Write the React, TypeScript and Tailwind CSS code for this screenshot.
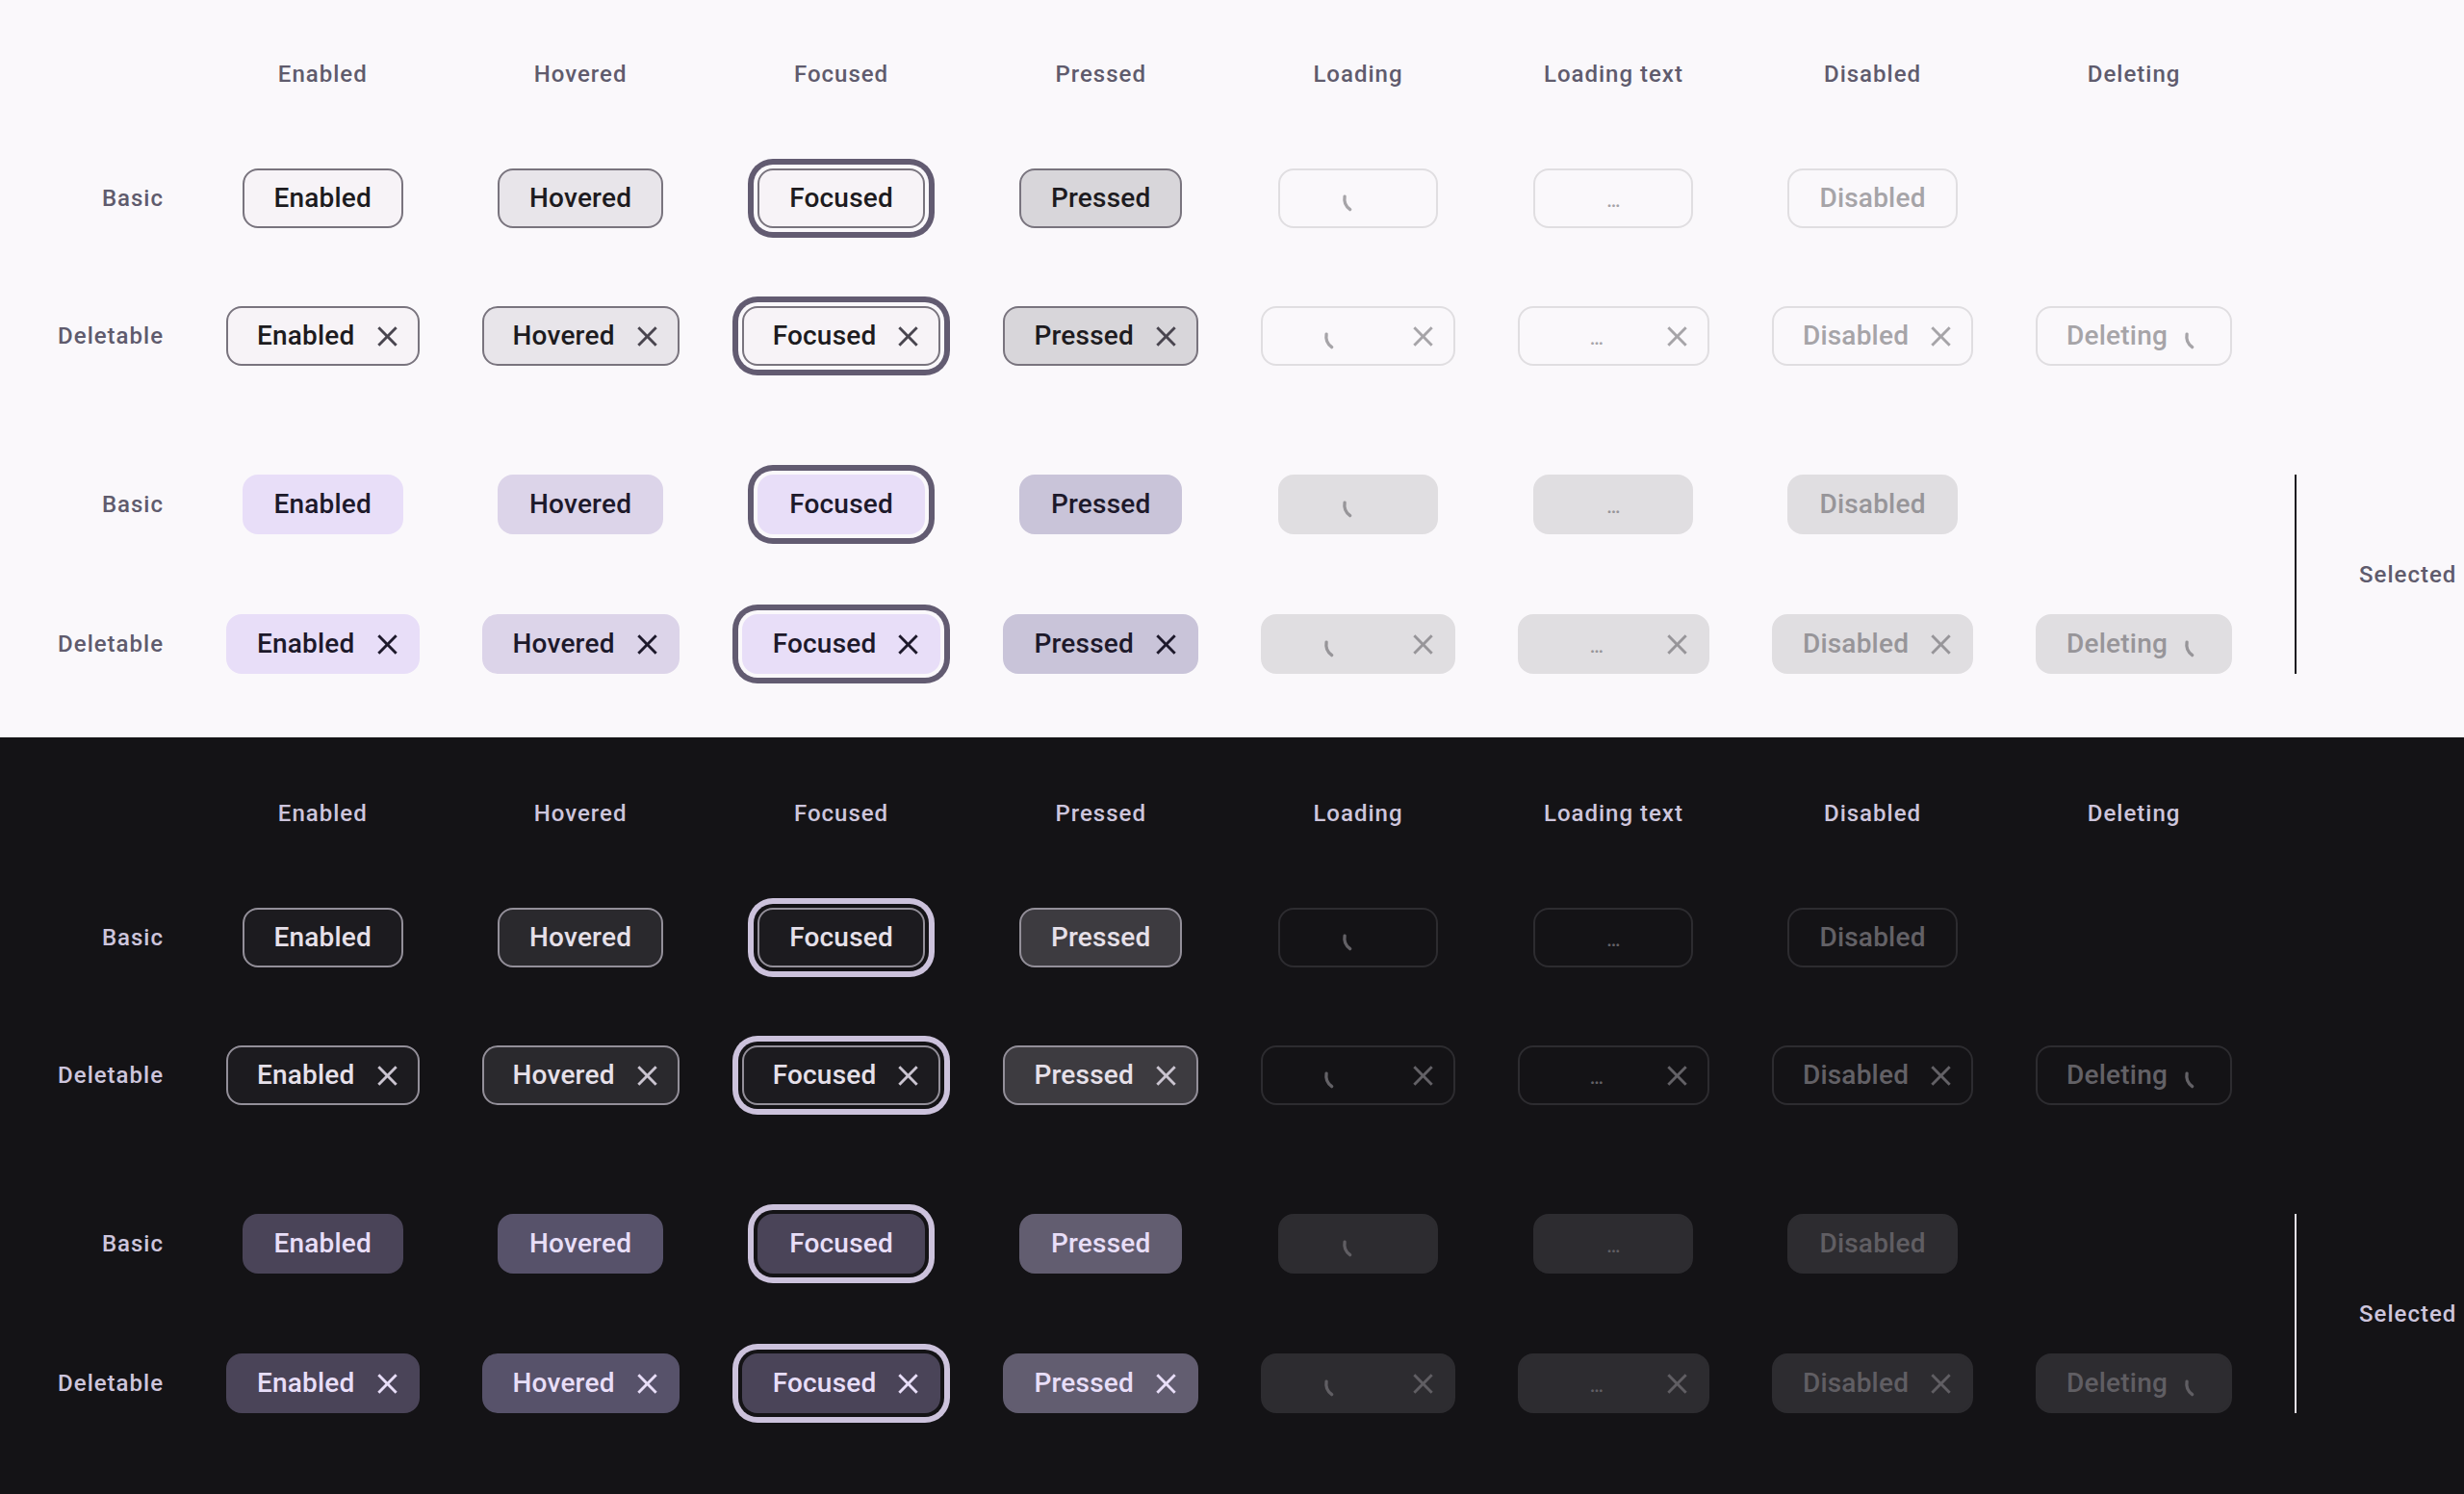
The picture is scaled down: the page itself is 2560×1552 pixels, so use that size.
import React from 'react';

type State = 'enabled' | 'hovered' | 'focused' | 'pressed' | 'loading' | 'loadingText' | 'disabled' | 'deleting';

const columns: { state: State; title: string }[] = [
    { state: 'enabled', title: 'Enabled' },
    { state: 'hovered', title: 'Hovered' },
    { state: 'focused', title: 'Focused' },
    { state: 'pressed', title: 'Pressed' },
    { state: 'loading', title: 'Loading' },
    { state: 'loadingText', title: 'Loading text' },
    { state: 'disabled', title: 'Disabled' },
    { state: 'deleting', title: 'Deleting' },
];

const colStart = ['col-start-2', 'col-start-3', 'col-start-4', 'col-start-5', 'col-start-6', 'col-start-7', 'col-start-8', 'col-start-9'];

type Look = { box: string; icon: string; spin: string };

const lightOff: Record<State, Look> = {
    enabled: { box: 'border-[#79747E] bg-[#F7F3F7] text-[#1D1B20]', icon: 'text-[#49454F]', spin: '' },
    hovered: { box: 'border-[#79747E] bg-[#E8E5EA] text-[#1D1B20]', icon: 'text-[#49454F]', spin: '' },
    focused: { box: 'border-[#79747E] bg-[#F7F3F7] text-[#1D1B20] shadow-[0_0_0_4px_#FAF8FB,0_0_0_10px_#625B71]', icon: 'text-[#49454F]', spin: '' },
    pressed: { box: 'border-[#79747E] bg-[#D8D6DA] text-[#1D1B20]', icon: 'text-[#49454F]', spin: '' },
    loading: { box: 'border-[#E0DEE1] text-[#A6A4A8]', icon: 'text-[#A6A4A8]', spin: 'text-[#A6A4A8]' },
    loadingText: { box: 'border-[#E0DEE1] text-[#A6A4A8]', icon: 'text-[#A6A4A8]', spin: 'text-[#A6A4A8]' },
    disabled: { box: 'border-[#E0DEE1] text-[#A6A4A8]', icon: 'text-[#A6A4A8]', spin: 'text-[#A6A4A8]' },
    deleting: { box: 'border-[#E0DEE1] text-[#A6A4A8]', icon: 'text-[#A6A4A8]', spin: 'text-[#A6A4A8]' },
};

const lightOn: Record<State, Look> = {
    enabled: { box: 'border-[#E8DEF8] bg-[#E8DEF8] text-[#1D192B]', icon: 'text-[#1D192B]', spin: '' },
    hovered: { box: 'border-[#DCD4E9] bg-[#DCD4E9] text-[#1D192B]', icon: 'text-[#1D192B]', spin: '' },
    focused: { box: 'border-[#E8DEF8] bg-[#E8DEF8] text-[#1D192B] shadow-[0_0_0_4px_#FAF8FB,0_0_0_10px_#625B71]', icon: 'text-[#1D192B]', spin: '' },
    pressed: { box: 'border-[#C9C4D9] bg-[#C9C4D9] text-[#1D192B]', icon: 'text-[#1D192B]', spin: '' },
    loading: { box: 'border-[#E0DEE1] bg-[#E0DEE1] text-[#979599]', icon: 'text-[#979599]', spin: 'text-[#979599]' },
    loadingText: { box: 'border-[#E0DEE1] bg-[#E0DEE1] text-[#979599]', icon: 'text-[#979599]', spin: 'text-[#979599]' },
    disabled: { box: 'border-[#E0DEE1] bg-[#E0DEE1] text-[#979599]', icon: 'text-[#979599]', spin: 'text-[#979599]' },
    deleting: { box: 'border-[#E0DEE1] bg-[#E0DEE1] text-[#979599]', icon: 'text-[#979599]', spin: 'text-[#979599]' },
};

const darkOff: Record<State, Look> = {
    enabled: { box: 'border-[#938F99] bg-[#1C1B1F] text-[#E6E0E9]', icon: 'text-[#CAC4D0]', spin: '' },
    hovered: { box: 'border-[#938F99] bg-[#2A292D] text-[#E6E0E9]', icon: 'text-[#CAC4D0]', spin: '' },
    focused: { box: 'border-[#938F99] bg-[#1C1B1F] text-[#E6E0E9] shadow-[0_0_0_4px_#141316,0_0_0_10px_#CCC2DC]', icon: 'text-[#CAC4D0]', spin: '' },
    pressed: { box: 'border-[#938F99] bg-[#3D3B40] text-[#E6E0E9]', icon: 'text-[#CAC4D0]', spin: '' },
    loading: { box: 'border-[#2D2C30] text-[#636166]', icon: 'text-[#636166]', spin: 'text-[#636166]' },
    loadingText: { box: 'border-[#2D2C30] text-[#636166]', icon: 'text-[#636166]', spin: 'text-[#636166]' },
    disabled: { box: 'border-[#2D2C30] text-[#636166]', icon: 'text-[#636166]', spin: 'text-[#636166]' },
    deleting: { box: 'border-[#2D2C30] text-[#636166]', icon: 'text-[#636166]', spin: 'text-[#636166]' },
};

const darkOn: Record<State, Look> = {
    enabled: { box: 'border-[#4A4458] bg-[#4A4458] text-[#E8DEF8]', icon: 'text-[#E8DEF8]', spin: '' },
    hovered: { box: 'border-[#57526A] bg-[#57526A] text-[#E8DEF8]', icon: 'text-[#E8DEF8]', spin: '' },
    focused: { box: 'border-[#4A4458] bg-[#4A4458] text-[#E8DEF8] shadow-[0_0_0_4px_#141316,0_0_0_10px_#CCC2DC]', icon: 'text-[#E8DEF8]', spin: '' },
    pressed: { box: 'border-[#625D70] bg-[#625D70] text-[#E8DEF8]', icon: 'text-[#E8DEF8]', spin: '' },
    loading: { box: 'border-[#2D2C30] bg-[#2D2C30] text-[#605E63]', icon: 'text-[#605E63]', spin: 'text-[#605E63]' },
    loadingText: { box: 'border-[#2D2C30] bg-[#2D2C30] text-[#605E63]', icon: 'text-[#605E63]', spin: 'text-[#605E63]' },
    disabled: { box: 'border-[#2D2C30] bg-[#2D2C30] text-[#605E63]', icon: 'text-[#605E63]', spin: 'text-[#605E63]' },
    deleting: { box: 'border-[#2D2C30] bg-[#2D2C30] text-[#605E63]', icon: 'text-[#605E63]', spin: 'text-[#605E63]' },
};

function CloseIcon({ className }: { className: string }) {
    return (
        <svg viewBox="0 0 24 24" className={`h-[35px] w-[35px] ${className}`} fill="currentColor">
            <path d="M19 6.41L17.59 5 12 10.59 6.41 5 5 6.41 10.59 12 5 17.59 6.41 19 12 13.41 17.59 19 19 17.59 13.41 12z" />
        </svg>
    );
}

// snapshot of an indeterminate progress arc
function Spinner({ className }: { className: string }) {
    return (
        <svg viewBox="0 0 36 36" className={`h-[35px] w-[35px] ${className}`} fill="none">
            <path d="M4.21 15.57 A14 14 0 0 0 9.97 29.47" stroke="currentColor" strokeWidth="3.4" strokeLinecap="round" />
        </svg>
    );
}

function Chip({ state, title, deletable, dark, selected }: { state: State; title: string; deletable: boolean; dark: boolean; selected: boolean }) {
    const look = (dark ? (selected ? darkOn : darkOff) : (selected ? lightOn : lightOff))[state];
    const pad = deletable ? 'pl-[30px] pr-[14px]' : 'px-[31px]';

    let label: React.ReactNode = <span>{title}</span>;
    if (state === 'loading') {
        label = <span className="flex w-[100px] justify-center"><Spinner className={look.spin} /></span>;
    } else if (state === 'loadingText') {
        label = <span className="flex w-[100px] justify-center pt-[4px] text-[20px] leading-none">…</span>;
    }

    return (
        <div className={`flex h-[62px] items-center rounded-[16px] border-2 text-[28px] font-medium tracking-[0.2px] whitespace-nowrap ${pad} ${look.box}`}>
            {label}
            {deletable && (
                <span className={`flex ${state === 'loading' ? 'ml-[19px]' : 'ml-[16px]'}`}>
                    {state === 'deleting' ? <Spinner className={look.spin} /> : <CloseIcon className={look.icon} />}
                </span>
            )}
        </div>
    );
}

function Section({ dark }: { dark: boolean }) {
    const head = dark ? 'text-[#CDC5DC]' : 'text-[#5F5B6D]';
    const rows = [
        { row: 'row-start-3', label: 'Basic', deletable: false, selected: false },
        { row: 'row-start-5', label: 'Deletable', deletable: true, selected: false },
        { row: 'row-start-7', label: 'Basic', deletable: false, selected: true },
        { row: 'row-start-9', label: 'Deletable', deletable: true, selected: true },
    ];

    return (
        <div className={dark ? 'flex-1 bg-[#141316] pt-[48px] pb-[66px]' : 'bg-[#FAF8FB] pt-[46px] pb-[66px]'}>
            <div className="grid grid-cols-[170px_repeat(8,auto)_2px_auto] grid-rows-[62px_67px_62px_81px_62px_113px_62px_83px_62px] gap-x-[65px] items-center justify-start">
                {columns.map((c, i) => (
                    <div key={c.title} className={`row-start-1 ${colStart[i]} justify-self-center text-[24px] font-medium tracking-[1px] ${head}`}>
                        {c.title}
                    </div>
                ))}
                {rows.map(r => (
                    <React.Fragment key={r.row}>
                        <div className={`${r.row} col-start-1 justify-self-end text-[24px] font-medium tracking-[1px] ${head}`}>{r.label}</div>
                        {columns.map((c, i) => {
                            if (c.state === 'deleting' && !r.deletable) return null;
                            return (
                                <div key={c.title} className={`${r.row} ${colStart[i]} justify-self-center`}>
                                    <Chip state={c.state} title={c.title} deletable={r.deletable} dark={dark} selected={r.selected} />
                                </div>
                            );
                        })}
                    </React.Fragment>
                ))}
                <div className={`col-start-10 row-start-7 row-end-10 self-stretch w-[2px] ${dark ? 'bg-[#E6E0E9]' : 'bg-[#1D1B20]'}`} />
                <div className={`col-start-11 row-start-7 row-end-10 self-center text-[24px] font-medium tracking-[1px] ${head}`}>Selected</div>
            </div>
        </div>
    );
}

export default function App() {
    return (
        <div className="min-h-screen flex flex-col font-['Roboto','Noto_Sans',sans-serif]">
            <Section dark={false} />
            <Section dark />
        </div>
    );
}
